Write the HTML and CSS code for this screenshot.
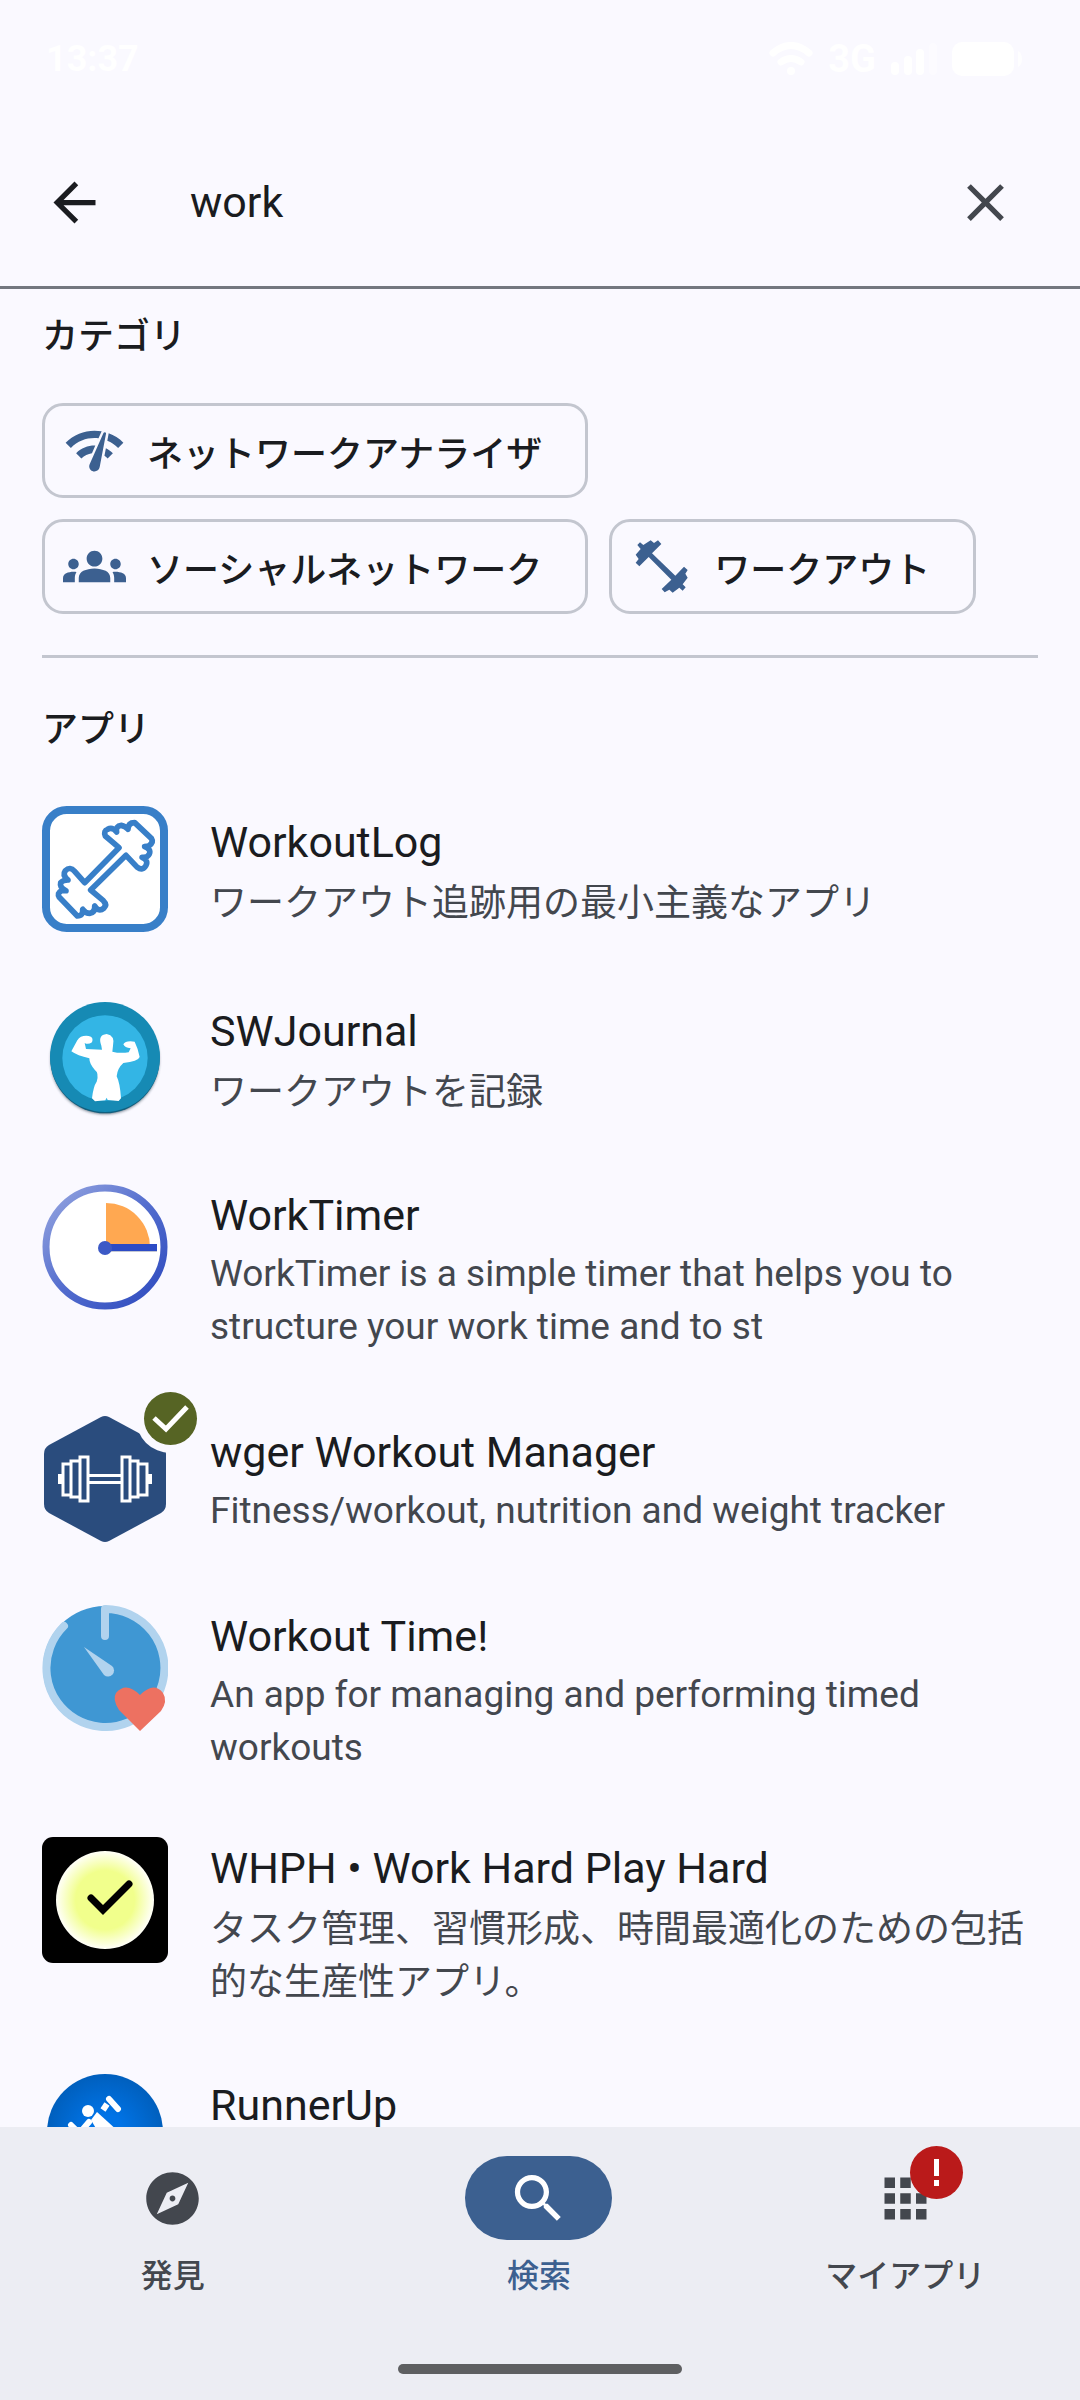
FILE: index.html
```html
<!DOCTYPE html>
<html lang="ja">
<head>
<meta charset="utf-8">
<meta name="viewport" content="width=device-width, initial-scale=1">
<title>検索</title>
<link rel="stylesheet" href="styles.css">
</head>
<body>
<div class="status">
  <span class="clock">13:37</span>
  <div class="status-icons">
    <svg width="44" height="34" viewBox="0 0 44 34" fill="none" stroke="#fff" stroke-linecap="round"><path d="M4 11Q22-4 40 11" stroke-width="7"/><path d="M12 20Q22 13 32 20" stroke-width="7"/><circle cx="22" cy="29" r="4" fill="#fff" stroke="none"/></svg>
    <span class="network">3G</span>
    <svg width="46" height="34" viewBox="0 0 46 34" fill="#fff"><rect y="20" width="8" height="13" rx="4"/><rect x="13" y="14" width="8" height="19" rx="4"/><rect x="25" y="7" width="8" height="26" rx="4"/><rect x="38" y="1" width="8" height="32" rx="4" opacity=".4"/></svg>
    <svg width="70" height="34" viewBox="0 0 70 34" fill="#fff"><rect width="62" height="34" rx="10"/><path d="M66 9Q70 11 70 17T66 25z" opacity=".8"/></svg>
  </div>
</div>
<form class="search" role="search">
  <button class="icon-button" type="button" aria-label="戻る"><svg class="icon" viewBox="0 0 24 24"><path d="M20 11H7.83l5.59-5.59L12 4l-8 8 8 8 1.41-1.41L7.83 13H20v-2z"/></svg></button>
  <input class="query" type="text" value="work" aria-label="アプリを検索">
  <button class="icon-button clear" type="reset" aria-label="消去"><svg class="icon" viewBox="0 0 24 24"><path d="M19 6.41L17.59 5 12 10.59 6.41 5 5 6.41 10.59 12 5 17.59 6.41 19 12 13.41 17.59 19 19 17.59 13.41 12z"/></svg></button>
</form>
<main class="results">
  <section class="categories">
    <h2 class="heading">カテゴリ</h2>
    <div class="chips">
      <button class="chip" type="button"><svg class="icon" viewBox="0 0 24 24"><path d="M15.9 5c-.17 0-.32.09-.41.23l-.07.15-5.18 11.65c-.16.29-.26.61-.26.96 0 1.11.9 2.01 2.01 2.01.96 0 1.77-.68 1.96-1.59l.01-.03L16.4 5.5c0-.28-.22-.5-.5-.5zM1 9l2 2c2.88-2.88 6.79-4.08 10.53-3.62l1.19-2.68C9.89 3.84 4.74 5.27 1 9zm20 2l2-2c-1.64-1.64-3.55-2.82-5.59-3.57l-.53 2.82c1.5.62 2.9 1.53 4.12 2.75zm-4 4l2-2c-.8-.8-1.7-1.42-2.66-1.89l-.55 2.92c.42.27.83.59 1.21.97zM5 13l2 2c1.13-1.13 2.56-1.79 4.03-2l1.28-2.88c-2.63-.08-5.3.87-7.31 2.88z"/></svg>ネットワークアナライザ</button>
      <button class="chip" type="button"><svg class="icon" viewBox="0 0 24 24"><path d="M12 12.75c1.63 0 3.07.39 4.24.9 1.08.48 1.76 1.56 1.76 2.73V18H6v-1.61c0-1.18.68-2.26 1.76-2.73 1.17-.52 2.61-.91 4.24-.91zM4 13c1.1 0 2-.9 2-2s-.9-2-2-2-2 .9-2 2 .9 2 2 2zm1.13 1.1c-.37-.06-.74-.1-1.13-.1-.99 0-1.93.21-2.78.58C.48 14.9 0 15.62 0 16.43V18h4.5v-1.61c0-.83.23-1.61.63-2.29zM20 13c1.1 0 2-.9 2-2s-.9-2-2-2-2 .9-2 2 .9 2 2 2zm4 3.43c0-.81-.48-1.53-1.22-1.85-.85-.37-1.79-.58-2.78-.58-.39 0-.76.04-1.13.1.4.68.63 1.46.63 2.29V18H24v-1.57zM12 6c1.66 0 3 1.34 3 3s-1.34 3-3 3-3-1.34-3-3 1.34-3 3-3z"/></svg>ソーシャルネットワーク</button>
      <button class="chip" type="button"><svg class="icon" viewBox="60 42 189 189"><path d="M82 72L90 64 100 72 122 58 132 66 144 58 154 69 126 97 196 164 222 137 233 147 226 158 233 170 218 190 227 199 218 209 208 200 188 215 178 206 164 214 155 204 184 176 116 108 88 136 77 125 86 114 77 101 92 84z"/></svg>ワークアウト</button>
    </div>
  </section>
  <section class="apps">
    <h2 class="heading">アプリ</h2>
    <ul class="list">
      <li><a class="app" href="#workoutlog">
        <span class="logo"><svg viewBox="6 6 378 378" fill="none" stroke="#387fc8" stroke-linejoin="round"><rect x="18" y="18" width="354" height="354" rx="62" fill="#fff" stroke-width="24"/><path stroke-width="17" d="M237 131L196 96Q190 80 203 76Q217 68 230 84Q226 66 244 64Q256 66 264 76Q264 56 284 56L334 103Q342 116 326 126L314 128Q334 136 328 150Q322 162 306 160Q326 168 318 184Q308 202 292 190L258 154L152 258L190 290Q202 302 192 312Q176 326 164 306Q166 324 150 328Q136 328 128 316Q130 336 112 336L58 280Q50 268 64 260L78 260Q58 250 62 236Q68 228 84 228Q66 214 76 200Q90 186 104 202L134 236z"/></svg></span>
        <span class="text"><span class="name">WorkoutLog</span><span class="summary">ワークアウト追跡用の最小主義なアプリ</span></span></a></li>
      <li><a class="app" href="#swjournal">
        <span class="logo"><svg viewBox="6 6 378 378"><defs><filter id="soft" x="-20%" y="-20%" width="140%" height="140%"><feGaussianBlur stdDeviation="5"/></filter></defs><circle cx="195" cy="201" r="162" fill="#203848" opacity=".7" filter="url(#soft)"/><circle cx="195" cy="197" r="164" fill="#125f7e"/><circle cx="195" cy="192" r="165" fill="#168ab4"/><circle cx="195" cy="195" r="128" fill="#33b5e5"/><path fill="#fff" d="M94 175L112 142Q122 126 146 129Q162 132 156 148Q144 156 134 150L138 168L186 170L184 158Q172 126 200 123Q226 128 219 158L217 176Q240 182 266 178L272 166Q254 164 250 154Q256 142 284 146Q294 166 299 192Q294 206 250 210Q232 226 230 250Q240 270 243 316L236 324L203 321 200 314 196 322 165 325 156 316Q160 280 170 266Q178 240 164 230Q148 212 148 196Q112 188 94 175z"/></svg></span>
        <span class="text"><span class="name">SWJournal</span><span class="summary">ワークアウトを記録</span></span></a></li>
      <li><a class="app" href="#worktimer">
        <span class="logo"><svg viewBox="0 0 126 126"><defs><linearGradient id="ring" x1="0" y1="0" x2="1" y2="1"><stop offset=".12" stop-color="#8799dc"/><stop offset=".5" stop-color="#536dce"/><stop offset=".9" stop-color="#3450c1"/></linearGradient></defs><circle cx="63" cy="63" r="59" fill="#fff" stroke="url(#ring)" stroke-width="7"/><path d="M64 63V19A44 44 0 0 1 108 63z" fill="#ffa851"/><path d="M64 62h51v6H64z" fill="#8890a8" opacity=".5"/><path d="M64 60h51v7H64z" fill="#2c4bc5"/><circle cx="63" cy="64" r="7" fill="#3c59c6"/></svg></span>
        <span class="text" lang="en"><span class="name">WorkTimer</span><span class="summary">WorkTimer is a simple timer that helps you to structure your work time and to st</span></span></a></li>
      <li><a class="app" href="#wger">
        <span class="logo"><svg viewBox="0 0 126 126"><path fill="#2a4c7d" d="M59 1Q63-1 67 1L119 29Q124 32 124 38V88Q124 94 119 97L67 125Q63 127 59 125L7 97Q2 94 2 88V38Q2 32 7 29z"/><g fill="none" stroke="#fff" stroke-width="3"><path d="M47 59.500H79M47 66.500H79"/><path d="M38 41h8v44h-8zM80 41h8v44h-8zM29 45h9v36h-9zM88 45h8v36h-8zM21 48h8v31h-8zM96 48h9v31h-9z"/></g><path fill="#fff" d="M16 58h5v10h-5zM105 58h5v10h-5z"/></svg><span class="badge installed"><svg viewBox="0 0 53 53" fill="none" stroke="#fff" stroke-width="5"><path d="M10 26L22 37 43 15"/></svg></span></span>
        <span class="text" lang="en"><span class="name">wger Workout Manager</span><span class="summary">Fitness/workout, nutrition and weight tracker</span></span></a></li>
      <li><a class="app" href="#workouttime">
        <span class="logo"><svg viewBox="0 0 126 126"><circle cx="63" cy="63" r="62" fill="#3f97d3"/><g fill="none" stroke="#b1d3ee" stroke-width="8" stroke-linecap="round" stroke-linejoin="round"><path d="M22 21A59 59 0 1 0 63 4V31"/></g><path fill="#b1d3ee" d="M42 42L70 61A5 5 0 0 1 62 70z"/><path fill="#ed7161" d="M98 126L77 105Q70 94 74 88Q84 76 98 90Q112 76 121 88Q126 96 119 106z"/></svg></span>
        <span class="text" lang="en"><span class="name">Workout Time!</span><span class="summary">An app for managing and performing timed workouts</span></span></a></li>
      <li><a class="app" href="#whph">
        <span class="logo"><svg viewBox="0 0 126 126"><defs><radialGradient id="glow"><stop offset=".6" stop-color="#f1ff8c"/><stop offset="1" stop-color="#fffff8"/></radialGradient></defs><rect width="126" height="126" rx="11"/><circle cx="63" cy="63" r="49" fill="url(#glow)"/><path d="M49 61L61 73 87 47" fill="none" stroke="#000" stroke-width="7" stroke-linecap="round"/></svg></span>
        <span class="text"><span class="name">WHPH • Work Hard Play Hard</span><span class="summary">タスク管理、習慣形成、時間最適化のための包括的な生産性アプリ。</span></span></a></li>
      <li><a class="app" href="#runnerup">
        <span class="logo"><svg viewBox="0 0 126 126"><defs><radialGradient id="sky"><stop offset=".3" stop-color="#0073e6"/><stop offset="1" stop-color="#005fbd"/></radialGradient></defs><circle cx="63" cy="63" r="58" fill="url(#sky)"/><g fill="none" stroke="#fff" stroke-width="6" stroke-linecap="round"><path d="M67 30l9 10M41 60l6-7M29 56l5 5"/><path d="M61 41l4-6" stroke-linecap="butt"/><path d="M76 64l9 5-8 15M60 76l-9 14-14-2"/></g><circle cx="46" cy="42" r="6" fill="#fff"/><path fill="#fff" d="M49 51l6-8 22 20-12 15z"/></svg></span>
        <span class="text"><span class="name">RunnerUp</span></span></a></li>
    </ul>
  </section>
</main>
<footer class="bottom">
  <nav class="tabs">
    <a class="tab" href="#discover"><span class="pill"><svg class="icon" viewBox="0 0 24 24"><path d="M12 10.900c-.61 0-1.100.49-1.100 1.100s.49 1.100 1.100 1.100c.61 0 1.100-.49 1.100-1.100s-.49-1.100-1.100-1.100zM12 2C6.480 2 2 6.480 2 12s4.480 10 10 10 10-4.480 10-10S17.520 2 12 2zm2.190 12.190L6 18l3.810-8.190L18 6l-3.810 8.190z"/></svg></span>発見</a>
    <a class="tab active" href="#search" aria-current="page"><span class="pill"><svg class="icon" viewBox="0 0 24 24"><path d="M15.500 14h-.79l-.28-.27C15.410 12.590 16 11.110 16 9.500 16 5.910 13.090 3 9.500 3S3 5.910 3 9.500 5.910 16 9.500 16c1.610 0 3.090-.59 4.230-1.570l.27.28v.79l5 4.990L20.490 19l-4.990-5zm-6 0C7.010 14 5 11.990 5 9.500S7.010 5 9.500 5 14 7.010 14 9.500 11.990 14 9.500 14z"/></svg></span>検索</a>
    <a class="tab" href="#myapps"><span class="pill"><svg class="icon" viewBox="0 0 24 24"><path d="M4 8h4V4H4v4zm6 12h4v-4h-4v4zm-6 0h4v-4H4v4zm0-6h4v-4H4v4zm6 0h4v-4h-4v4zm6-10v4h4V4h-4zm-6 4h4V4h-4v4zm6 6h4v-4h-4v4zm0 6h4v-4h-4v4z"/></svg><span class="badge alert"><svg viewBox="0 0 53 53" fill="#fff"><path d="M24 13h5v17h-5zM24 34h5v6h-5z"/></svg></span></span>マイアプリ</a>
  </nav>
  <div class="home-bar"></div>
</footer>
</body>
</html>
```
FILE: styles.css
```css
* {
  box-sizing: border-box;
}

body {
  display: flex;
  flex-direction: column;
  height: 100vh;
  margin: 0;
  background: #faf9ff;
  color: #1a1c20;
  font-family: Roboto, "Noto Sans CJK JP", sans-serif;
}

a {
  color: inherit;
  text-decoration: none;
}

button {
  border: 0;
  background: none;
  color: inherit;
  font: inherit;
}

svg {
  display: block;
}

.icon {
  flex: none;
  width: 63px;
  height: 63px;
  fill: currentColor;
}

.status {
  display: flex;
  flex: none;
  align-items: center;
  justify-content: space-between;
  height: 118px;
  padding: 0 58px 0 46px;
  color: #fff;
  font-size: 36px;
  font-weight: 700;
}

.status-icons {
  display: flex;
  align-items: center;
  gap: 15px;
}

.network {
  font-size: 38px;
}

.search {
  display: flex;
  flex: none;
  align-items: center;
  height: 171px;
  padding: 0 32px 0 11px;
  border-bottom: 3px solid #73777f;
}

.icon-button {
  display: grid;
  flex: none;
  place-items: center;
  width: 126px;
  height: 126px;
  padding: 0;
}

.search .clear {
  color: #43474e;
}

.query {
  flex: 1;
  min-width: 0;
  margin-left: 53px;
  padding: 0;
  border: 0;
  outline: 0;
  background: none;
  color: inherit;
  font: inherit;
  font-size: 43px;
}

.results {
  flex: 1;
  min-height: 0;
  overflow-y: auto;
  scrollbar-width: none;
}

.heading {
  margin: 0;
  font-size: 36px;
  font-weight: 500;
  line-height: 53px;
}

.categories {
  margin: 0 42px;
  padding: 22px 0 41px;
  border-bottom: 3px solid #c3c6cf;
}

.chips {
  display: flex;
  flex-wrap: wrap;
  gap: 21px;
  padding-top: 39px;
}

.chip {
  display: flex;
  align-items: center;
  gap: 21px;
  height: 95px;
  padding: 0 43px 0 18px;
  border: 3px solid #c3c6cf;
  border-radius: 21px;
  font-size: 36px;
  font-weight: 500;
}

.chip .icon {
  color: #3c6090;
}

.apps {
  padding-top: 46px;
}

.apps .heading {
  padding: 0 42px;
}

.list {
  margin: 0;
  padding: 18px 0 0;
  list-style: none;
}

.app {
  display: flex;
  align-items: flex-start;
  gap: 42px;
  padding: 31px 42px 32px;
}

.logo {
  position: relative;
  flex: none;
  width: 126px;
  height: 126px;
}

.text {
  display: flex;
  flex: 1;
  flex-direction: column;
  align-self: center;
  min-width: 0;
  min-height: 116px;
}

.name {
  font-size: 43px;
  line-height: 63px;
}

.summary {
  color: #43474e;
  font-size: 37px;
  line-height: 53px;
}

/* Japanese glyphs sit lower under the title than Latin ones */
.summary:lang(ja) {
  margin-bottom: -3px;
  padding-top: 3px;
}

.badge {
  position: absolute;
  width: 53px;
  height: 53px;
  border-radius: 50%;
}

.installed {
  top: -24px;
  right: -29px;
  background: #566424;
  box-shadow: 0 0 0 8px #faf9ff;
}

.alert {
  top: -10px;
  right: 16px;
  background: #ba1a1a;
}

.bottom {
  flex: none;
  background: #ecedf3;
}

.tabs {
  display: flex;
  gap: 21px;
  padding: 29px 2px 60px 0;
}

.tab {
  display: flex;
  flex: 1;
  flex-direction: column;
  align-items: center;
  gap: 15px;
  color: #43474e;
  font-size: 32px;
  font-weight: 500;
  line-height: 42px;
}

.pill {
  position: relative;
  display: grid;
  place-items: center;
  width: 147px;
  height: 84px;
  border-radius: 42px;
}

.active {
  color: #3c6090;
}

.active .pill {
  background: #3c6090;
  color: #fff;
}

.home-bar {
  width: 284px;
  height: 10px;
  margin: 7px auto 26px;
  border-radius: 5px;
  background: #5e5f61;
}
```
